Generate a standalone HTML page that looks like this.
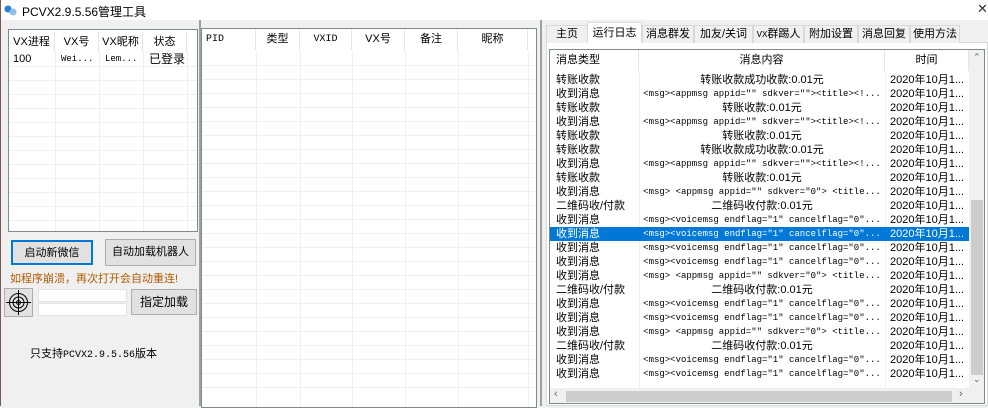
<!DOCTYPE html>
<html><head><meta charset="utf-8"><style>
*{margin:0;padding:0;box-sizing:border-box}
body{width:988px;height:406px;background:#f0f0f0;font-family:"Liberation Sans","Noto Sans CJK SC",sans-serif;font-size:11px;color:#000;position:relative;overflow:hidden}
.a{position:absolute}
.mono{font-family:"Liberation Mono","Noto Sans CJK SC",monospace;font-size:9px}
.list{background:#fff;border:1px solid #a0a0a0}
.hd{position:absolute;top:0;height:21px;line-height:21px;text-align:center;border-right:1px solid #e5e5e5}
.gl{position:absolute;left:0;right:0;height:1px;background:#f0f0f0}
.vl{position:absolute;top:0;bottom:0;width:1px;background:#f0f0f0}
.btn{position:absolute;background:#e1e1e1;border:1px solid #adadad;text-align:center}
.row{position:absolute;left:0;height:14px;line-height:14px;width:419px;white-space:nowrap}
.row span{position:absolute;top:0;overflow:hidden}
.c1{left:6px;width:83px}
.c2{left:89px;width:246px;text-align:center}
.c3{left:335px;width:84px;text-align:center}
.sel{background:#0078d7;color:#fff}
.tab{position:absolute;top:25px;height:18px;line-height:17px;border:1px solid #d9d9d9;border-bottom:none;background:#f0f0f0;text-align:center;white-space:nowrap}
</style></head><body>
<div class="a" style="left:0;top:0;width:988px;height:20px;background:#fff"></div>
<div class="a" style="left:0;top:0;width:1px;height:406px;background:#7a5a50"></div>
<svg class="a" style="left:4px;top:4px" width="14" height="12"><circle cx="4" cy="5" r="3.5" fill="#2a7bd6"/><circle cx="9" cy="8" r="3.5" fill="#8fbfe8"/></svg>
<div class="a" style="left:22px;top:3px;font-size:12px">PCVX2.9.5.56管理工具</div>
<div class="a" style="left:977px;top:1px;font-size:13px;color:#333">✕</div>

<div class="a list" style="left:8px;top:29px;width:190px;height:203px;border-color:#828790">
 <div class="hd" style="left:0;width:46px;top:2px">VX进程</div>
 <div class="hd" style="left:46px;width:44px;top:2px">VX号</div>
 <div class="hd" style="left:90px;width:44px;top:2px">VX昵称</div>
 <div class="hd" style="left:134px;width:44px;top:2px">状态</div>
 <div class="vl" style="left:46px;top:22px"></div><div class="vl" style="left:90px;top:22px"></div><div class="vl" style="left:134px;top:22px"></div><div class="vl" style="left:178px;top:22px"></div>
 <div class="a" style="left:4px;top:22px;line-height:14px">100</div>
 <div class="a mono" style="left:52px;top:22px;line-height:14px">Wei...</div>
 <div class="a mono" style="left:96px;top:22px;line-height:14px">Lem...</div>
 <div class="a" style="left:140px;top:22px;line-height:14px;font-size:12px">已登录</div>
 <div class="gl" style="top:36px"></div><div class="gl" style="top:50px"></div><div class="gl" style="top:64px"></div><div class="gl" style="top:78px"></div><div class="gl" style="top:92px"></div><div class="gl" style="top:106px"></div><div class="gl" style="top:120px"></div><div class="gl" style="top:134px"></div><div class="gl" style="top:148px"></div><div class="gl" style="top:162px"></div><div class="gl" style="top:176px"></div><div class="gl" style="top:190px"></div>
</div>
<div class="btn" style="left:11px;top:240px;width:82px;height:25px;line-height:22px;border:2px solid #0078d7">启动新微信</div>
<div class="btn" style="left:105px;top:239px;width:91px;height:27px;line-height:25px">自动加载机器人</div>
<div class="a" style="left:10px;top:270px;color:#b05a00">如程序崩溃，再次打开会自动重连!</div>
<div class="a" style="left:4px;top:288px;width:29px;height:29px;border:1px solid #adadad;background:#e1e1e1"></div>
<svg class="a" style="left:5px;top:289px" width="27" height="27" viewBox="0 0 27 27" fill="none" stroke="#000" stroke-width="1"><circle cx="13.5" cy="13.5" r="9"/><circle cx="13.5" cy="13.5" r="5.5"/><circle cx="13.5" cy="13.5" r="2"/><path d="M13.5 1v25M1 13.5h25"/></svg>
<div class="a" style="left:38px;top:289px;width:89px;height:13px;background:#fff;border:1px solid #e3e3e3"></div>
<div class="a" style="left:38px;top:303px;width:89px;height:13px;background:#fff;border:1px solid #e3e3e3"></div>
<div class="btn" style="left:131px;top:289px;width:66px;height:26px;line-height:24px;font-size:12px">指定加载</div>
<div class="a" style="left:30px;top:345px">只支持<span class="mono" style="font-size:10px">PCVX2.9.5.56</span>版本</div>
<div class="a" style="left:199px;top:20px;width:2px;height:386px;background:#a0a0a0"></div>

<div class="a list" style="left:201px;top:28px;width:336px;height:380px;border-color:#828790">
 <div class="hd mono" style="left:0;width:54px;text-align:left;padding-left:4px;font-size:10px">PID</div>
 <div class="hd" style="left:54px;width:44px">类型</div>
 <div class="hd mono" style="left:98px;width:52px;font-size:10px">VXID</div>
 <div class="hd" style="left:150px;width:53px">VX号</div>
 <div class="hd" style="left:203px;width:53px">备注</div>
 <div class="hd" style="left:256px;width:70px">昵称</div>
 <div class="vl" style="left:54px;top:22px"></div><div class="vl" style="left:98px;top:22px"></div><div class="vl" style="left:150px;top:22px"></div><div class="vl" style="left:203px;top:22px"></div><div class="vl" style="left:256px;top:22px"></div><div class="vl" style="left:326px;top:22px"></div>
 <div class="gl" style="top:36px"></div><div class="gl" style="top:50px"></div><div class="gl" style="top:64px"></div><div class="gl" style="top:78px"></div><div class="gl" style="top:92px"></div><div class="gl" style="top:106px"></div><div class="gl" style="top:120px"></div><div class="gl" style="top:134px"></div><div class="gl" style="top:148px"></div><div class="gl" style="top:162px"></div><div class="gl" style="top:176px"></div><div class="gl" style="top:190px"></div><div class="gl" style="top:204px"></div><div class="gl" style="top:218px"></div><div class="gl" style="top:232px"></div><div class="gl" style="top:246px"></div><div class="gl" style="top:260px"></div><div class="gl" style="top:274px"></div><div class="gl" style="top:288px"></div><div class="gl" style="top:302px"></div><div class="gl" style="top:316px"></div><div class="gl" style="top:330px"></div><div class="gl" style="top:344px"></div><div class="gl" style="top:358px"></div>
</div>
<div class="a" style="left:540px;top:20px;width:2px;height:386px;background:#a0a0a0"></div>

<div class="a" style="left:546px;top:42px;width:442px;height:364px;background:#fff;border:1px solid #d9d9d9"></div>
<div class="tab" style="left:546px;width:42px">主页</div>
<div class="tab" style="left:587px;width:55px;top:22px;height:21px;line-height:20px;background:#fff;border-bottom:1px solid #fff">运行日志</div>
<div class="tab" style="left:642px;width:52px">消息群发</div>
<div class="tab" style="left:694px;width:59px">加友/关词</div>
<div class="tab" style="left:753px;width:51px"><span class="mono">VX</span>群踢人</div>
<div class="tab" style="left:804px;width:54px">附加设置</div>
<div class="tab" style="left:858px;width:52px">消息回复</div>
<div class="tab" style="left:910px;width:50px">使用方法</div>

<div class="a list" style="left:549px;top:49px;width:436px;height:355px;border-color:#828790;overflow:hidden">
 <div class="hd" style="left:0;width:89px;text-align:left;padding-left:6px">消息类型</div>
 <div class="hd" style="left:89px;width:246px">消息内容</div>
 <div class="hd" style="left:335px;width:84px">时间</div>
 <div class="vl" style="left:89px;top:22px"></div><div class="vl" style="left:335px;top:22px"></div>
 <div id="rows" class="a" style="left:0;top:23px;width:419px"></div>
 <div class="a" style="left:419px;top:0;width:16px;height:338px;background:#f0f0f0"></div>
 <div class="a" style="left:423px;top:2px;font-size:9px;color:#606060">⌃</div>
 <div class="a" style="left:421px;top:150px;width:12px;height:175px;background:#cdcdcd"></div>
 <div class="a" style="left:423px;top:324px;font-size:9px;color:#606060">⌄</div>
 <div class="a" style="left:0;top:338px;width:435px;height:17px;background:#f0f0f0"></div>
 <div class="a" style="left:16px;top:341px;width:386px;height:11px;background:#cdcdcd"></div>
 <div class="a" style="left:4px;top:338px;color:#606060;font-size:11px">‹</div>
 <div class="a" style="left:409px;top:338px;color:#606060;font-size:11px">›</div>
</div>
<script>
var A='&lt;msg&gt;&lt;appmsg appid="" sdkver=""&gt;&lt;title&gt;&lt;!...',
V='&lt;msg&gt;&lt;voicemsg endflag="1" cancelflag="0"...',
P='&lt;msg&gt; &lt;appmsg appid="" sdkver="0"&gt; &lt;title...',
S='收到消息',Z='转账收款',Q='二维码收/付款';
var r=[[Z,'转账收款成功收款:0.01元',0],[S,A,1],[Z,'转账收款:0.01元',0],[S,A,1],[Z,'转账收款:0.01元',0],[Z,'转账收款成功收款:0.01元',0],[S,A,1],[Z,'转账收款:0.01元',0],[S,P,1],[Q,'二维码收付款:0.01元',0],[S,V,1],[S,V,1],[S,V,1],[S,V,1],[S,P,1],[Q,'二维码收付款:0.01元',0],[S,V,1],[S,V,1],[S,P,1],[Q,'二维码收付款:0.01元',0],[S,V,1],[S,V,1]];
var h='';r.forEach(function(x,i){h+='<div class="row'+(i==11?' sel':'')+'" style="top:'+(i*14)+'px"><span class="c1">'+x[0]+'</span><span class="c2'+(x[2]?' mono':'')+'">'+x[1]+'</span><span class="c3">2020年10月1...</span></div>';});
h+='<div class="row" style="top:308px"></div>';
document.getElementById('rows').innerHTML=h;
</script>
</body></html>
